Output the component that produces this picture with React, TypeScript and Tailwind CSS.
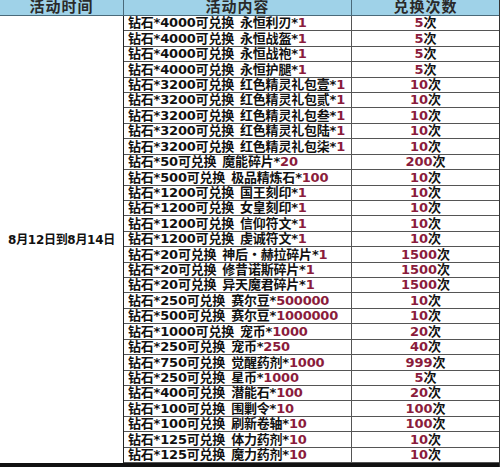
import React from 'react';

// 兑换列表: [前缀, 物品, 数量, 次数]
const rows: [string, string, string, string][] = [
  ['钻石*4000可兑换', '永恒利刃*', '1', '5'],
  ['钻石*4000可兑换', '永恒战盔*', '1', '5'],
  ['钻石*4000可兑换', '永恒战袍*', '1', '5'],
  ['钻石*4000可兑换', '永恒护腿*', '1', '5'],
  ['钻石*3200可兑换', '红色精灵礼包壹*', '1', '10'],
  ['钻石*3200可兑换', '红色精灵礼包贰*', '1', '10'],
  ['钻石*3200可兑换', '红色精灵礼包叁*', '1', '10'],
  ['钻石*3200可兑换', '红色精灵礼包陆*', '1', '10'],
  ['钻石*3200可兑换', '红色精灵礼包柒*', '1', '10'],
  ['钻石*50可兑换', '魔能碎片*', '20', '200'],
  ['钻石*500可兑换', '极品精炼石*', '100', '10'],
  ['钻石*1200可兑换', '国王刻印*', '1', '10'],
  ['钻石*1200可兑换', '女皇刻印*', '1', '10'],
  ['钻石*1200可兑换', '信仰符文*', '1', '10'],
  ['钻石*1200可兑换', '虔诚符文*', '1', '10'],
  ['钻石*20可兑换', '神后・赫拉碎片*', '1', '1500'],
  ['钻石*20可兑换', '修昔诺斯碎片*', '1', '1500'],
  ['钻石*20可兑换', '异天魔君碎片*', '1', '1500'],
  ['钻石*250可兑换', '赛尔豆*', '500000', '10'],
  ['钻石*500可兑换', '赛尔豆*', '1000000', '10'],
  ['钻石*1000可兑换', '宠币*', '1000', '20'],
  ['钻石*250可兑换', '宠币*', '250', '40'],
  ['钻石*750可兑换', '觉醒药剂*', '1000', '999'],
  ['钻石*250可兑换', '星币*', '1000', '5'],
  ['钻石*400可兑换', '潜能石*', '100', '20'],
  ['钻石*100可兑换', '围剿令*', '10', '100'],
  ['钻石*100可兑换', '刷新卷轴*', '10', '100'],
  ['钻石*125可兑换', '体力药剂*', '10', '10'],
  ['钻石*125可兑换', '魔力药剂*', '10', '10'],
];

const App = () => {
  return (
    <div
      className="w-[500px] h-[467px] bg-white text-[#111] font-bold overflow-hidden"
      style={{ fontFamily: '"DejaVu Sans", "Noto Sans CJK SC", sans-serif' }}
    >
      <div className="grid h-full grid-cols-[124px_228px_1fr] grid-rows-[16px_repeat(29,minmax(0,1fr))_4px] border-r border-[#333]">
        {/* 表头 */}
        <div className="bg-[#9fd2e8] border-r border-b border-[#4a6a7a] flex items-center justify-center text-[15px] text-[#2a2a2a] leading-[15px] font-semibold tracking-[1px]">
          活动时间
        </div>
        <div className="bg-[#9fd2e8] border-r border-b border-[#4a6a7a] flex items-center justify-center text-[15px] text-[#2a2a2a] leading-[15px] font-semibold tracking-[1px]">
          活动内容
        </div>
        <div className="bg-[#9fd2e8] border-b border-[#4a6a7a] flex items-center justify-center text-[15px] text-[#2a2a2a] leading-[15px] font-semibold tracking-[1px]">
          兑换次数
        </div>

        {/* 活动时间 */}
        <div className="row-span-[29] border-r border-[#222] flex items-center justify-center text-[12px] tracking-[-0.3px]">
          8月12日到8月14日
        </div>

        {rows.map(([pre, item, qty, times], i) => (
          <React.Fragment key={i}>
            <div className="border-r border-b border-[#555] flex items-end pl-1 pb-px text-[13px] leading-none whitespace-nowrap tracking-[-0.2px]">
              <span>{pre}</span>
              <span className="ml-[6px]">{item}</span>
              <span className="text-[#8a1c3c]">{qty}</span>
            </div>
            <div className="border-b border-[#555] flex items-end justify-center pb-px text-[13px] leading-none">
              <span className="text-[#8a1c3c]">{times}</span>
              <span>次</span>
            </div>
          </React.Fragment>
        ))}

        {/* 底边 */}
        <div className="col-span-3 bg-[#111]" />
      </div>
    </div>
  );
};

export default App;
